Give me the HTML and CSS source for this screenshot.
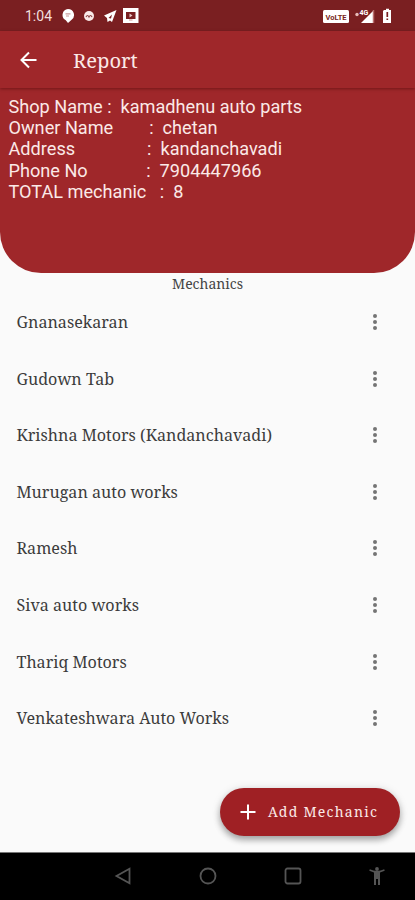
FILE: index.html
```
<!DOCTYPE html>
<html lang="en">
<head>
<meta charset="utf-8">
<title>Report</title>
<link rel="stylesheet" href="styles.css">
</head>
<body>
<div class="screen">
  <div class="status">
    <span class="clock">1:04</span>
    <svg class="notices" width="78" height="18" viewBox="0 0 78 18">
      <path d="M6 1a6 6 0 0 1 3.600 10.800L6 15l-2.200-2.700A6 6 0 0 1 6 1z" fill="#fff"/>
      <path d="M3.500 5.800h5M4 8h3" stroke="#c89a9a" stroke-width="1.200"/>
      <circle cx="27" cy="8" r="5" fill="#f9e9e8"/>
      <path d="M24 9q1.500-3 3 0 1.500-3 3 0" fill="none" stroke="#8b4547" stroke-width="1.200"/>
      <path d="M42 7.500 54.500 2 50 14l-2-1.500-2.500 1.500-.5-4z" fill="#fff"/>
      <path d="m46.500 10 3.500-3.500-1 4z" fill="#7a1f21"/>
      <path d="M61 0h15.500v15H61z" fill="#fff"/>
      <path d="M64 4h9.500v7H64z" fill="#7a1f21"/>
      <path d="m67.500 5.500 3 2-3 2zM67 11h3.500v2H67z" fill="#e8c9c9"/>
    </svg>
    <svg class="signals" width="70" height="16" viewBox="0 0 70 16">
      <rect x="0" y="2" width="26" height="13" rx="1.500" fill="#fff"/>
      <text x="13" y="11.500" text-anchor="middle" class="volte">VoLTE</text>
      <circle cx="34" cy="6.500" r="1.700" fill="#e7bcb9"/>
      <path d="M50 3v12H38z" fill="#fff"/>
      <path d="M50.500 2v13" stroke="#b96d6d" stroke-width="1.500"/>
      <text x="36.500" y="7" class="network">4G</text>
      <path d="M61 2h2V.8h3V2h2v13h-8V3z" fill="#fff"/>
      <path d="M64.300 4v5M64.300 10.500V12" stroke="#7a1f21" stroke-width="1.700"/>
    </svg>
  </div>
  <header class="appbar">
    <svg width="24" height="24" viewBox="0 0 24 24"><path d="M19.500 12H5M12 4.500 4.500 12l7.500 7.500" fill="none" stroke="#fff" stroke-width="2"/></svg>
    <h1>Report</h1>
  </header>
  <section class="shop">
    <p>Shop Name :  kamadhenu auto parts</p>
    <p>Owner Name        :  chetan</p>
    <p>Address                :  kandanchavadi</p>
    <p>Phone No             :  7904447966</p>
    <p>TOTAL mechanic   :  8</p>
  </section>
  <main>
    <h2>Mechanics</h2>
    <ul>
      <li><span>Gnanasekaran</span><i class="more"></i></li>
      <li><span>Gudown Tab</span><i class="more"></i></li>
      <li><span>Krishna Motors (Kandanchavadi)</span><i class="more"></i></li>
      <li><span>Murugan auto works</span><i class="more"></i></li>
      <li><span>Ramesh</span><i class="more"></i></li>
      <li><span>Siva auto works</span><i class="more"></i></li>
      <li><span>Thariq Motors</span><i class="more"></i></li>
      <li><span>Venkateshwara Auto Works</span><i class="more"></i></li>
    </ul>
    <button class="add">
      <svg width="16" height="16" viewBox="0 0 16 16"><path d="M8 .5v15M.5 8h15" stroke="#fff" stroke-width="2"/></svg>
      <span>Add Mechanic</span>
    </button>
  </main>
  <nav>
    <svg width="18" height="18" viewBox="0 0 18 18"><path d="M15.500 1.800v14.400L2.500 9z"/></svg>
    <svg width="18" height="18" viewBox="0 0 18 18"><circle cx="9" cy="9" r="7.500"/></svg>
    <svg width="18" height="18" viewBox="0 0 18 18"><rect x="1.500" y="1.500" width="15" height="15" rx="2"/></svg>
    <svg class="person" width="18" height="18" viewBox="0 0 18 18"><circle cx="9" cy="2" r="1.900"/><path d="m1.300 3.700.5-1.500Q9 5.800 16.200 2.200l.5 1.500-4.700 1.800V18h-2v-6H8v6H6V5.500z"/></svg>
  </nav>
</div>
</body>
</html>
```
FILE: styles.css
```
* { box-sizing: border-box; margin: 0; padding: 0; }
body { background: #fafafa; }
.screen {
  width: 415px;
  height: 900px;
  display: flex;
  flex-direction: column;
  overflow: hidden;
  font-family: "Noto Serif", "DejaVu Serif Condensed", "DejaVu Serif", serif;
}
.status {
  height: 31px;
  flex: none;
  display: flex;
  align-items: flex-start;
  background: #7a1f21;
  padding: 8px 12px 0 25px;
}
.clock {
  width: 37px;
  font: 14px/17px Roboto, sans-serif;
  color: #f3dfdd;
}
.signals { margin-left: auto; width: 70px; margin-right: 10px; flex: none; }
.volte { font: 700 7.500px Roboto, sans-serif; fill: #7a1f21; }
.network { font: 700 7px Roboto, sans-serif; fill: #fff; }
.appbar {
  height: 57px;
  flex: none;
  display: flex;
  align-items: center;
  gap: 32px;
  padding: 0 17px;
  background: #9f272a;
  box-shadow: 0 1px 3px rgba(60, 0, 0, .45);
  z-index: 1;
}
h1 { font-size: 20.200px; font-weight: 400; line-height: 28px; color: #fbe9e7; }
.shop {
  height: 185px;
  flex: none;
  padding: 8px 8.500px;
  background: #9f272a;
  border-radius: 0 0 41px 41px;
  color: #fbe9e7;
  font: 18.150px/21.200px Roboto, sans-serif;
}
.shop p { height: 21.200px; white-space: pre; }
main { height: 579px; flex: none; position: relative; }
h2 {
  height: 21px;
  font-size: 14px;
  font-weight: 400;
  line-height: 22px;
  text-align: center;
  color: #444;
}
ul { list-style: none; }
li {
  height: 56.550px;
  display: flex;
  align-items: center;
  justify-content: space-between;
  padding: 0 38px 0 16.500px;
  font-size: 16.120px;
  color: #3c3c3c;
}
.more {
  width: 4px;
  height: 4px;
  border-radius: 50%;
  background: #747474;
  box-shadow: 0 -6px #747474, 0 6px #747474;
}
.add {
  position: absolute;
  right: 15.500px;
  bottom: 16px;
  width: 180px;
  height: 48.500px;
  display: flex;
  align-items: center;
  gap: 12.500px;
  padding-left: 20px;
  border: 0;
  border-radius: 25px;
  background: #9f2024;
  box-shadow: 0 4px 6px rgba(0, 0, 0, .3), 0 1px 10px rgba(0, 0, 0, .12);
  color: #fbe9e7;
  font: 14px/20px "Noto Serif", "DejaVu Serif Condensed", "DejaVu Serif", serif;
  letter-spacing: 1.250px;
  white-space: nowrap;
}
nav {
  height: 48px;
  flex: none;
  display: flex;
  gap: 67px;
  padding: 14px 0 0 114px;
  background: #000;
  border-top: 1px solid #777;
}
nav svg { fill: none; stroke: #555; stroke-width: 1.800; flex: none; }
nav .person { fill: #555; stroke: none; margin-left: -1.500px; }
```
